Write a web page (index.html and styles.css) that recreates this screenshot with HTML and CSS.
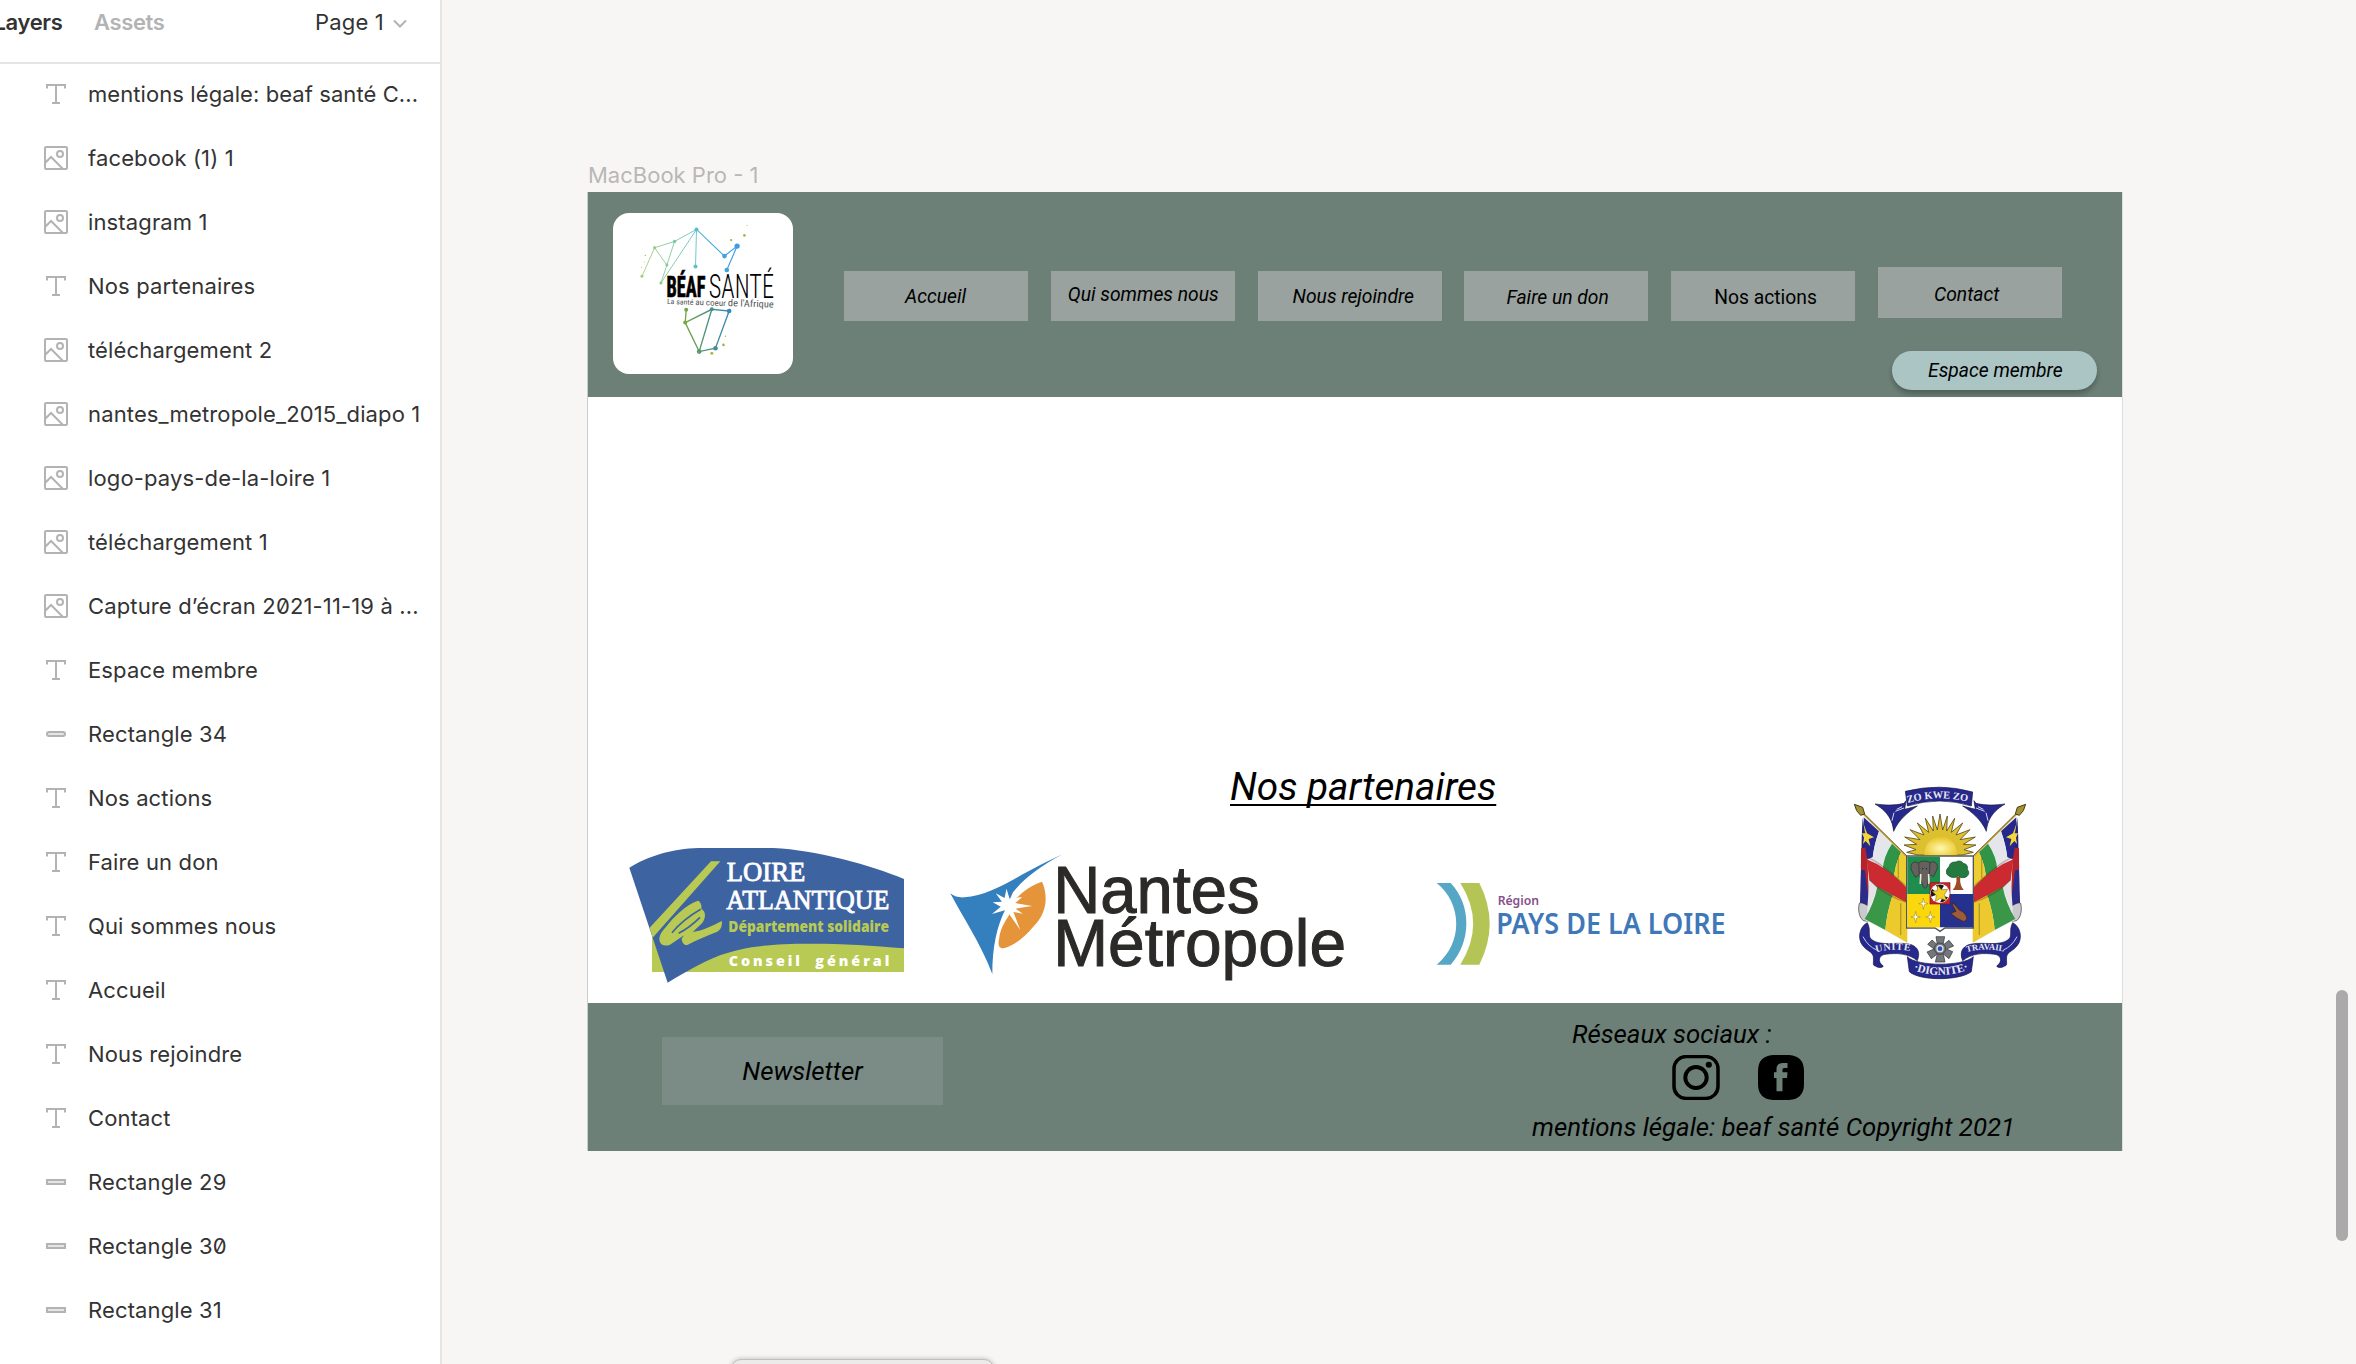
FILE: index.html
```html
<!DOCTYPE html>
<html lang="fr">
<head>
<meta charset="utf-8">
<title>Béaf Santé</title>
<link rel="stylesheet" href="styles.css">
</head>
<body>
<svg class="defs" width="0" height="0" aria-hidden="true">
  <symbol id="i-text" viewBox="0 0 24 24"><path d="M3 6.500V3h18v3.500M12 3v18M8 21h8" fill="none" stroke="#b3b3b3" stroke-width="2"/></symbol>
  <symbol id="i-image" viewBox="0 0 24 24"><g fill="none" stroke="#b3b3b3" stroke-width="2"><rect x="1" y="1" width="22" height="22" rx="1"/><circle cx="16" cy="8" r="3"/><path d="M1.500 16.500L7 11l12 12"/></g></symbol>
  <symbol id="i-pill" viewBox="0 0 24 24"><rect x="3" y="10" width="18" height="4" rx="2" fill="#e5e5e5" stroke="#b3b3b3" stroke-width="2"/></symbol>
  <symbol id="i-rect" viewBox="0 0 24 24"><rect x="3" y="10" width="18" height="4" fill="#e5e5e5" stroke="#b3b3b3" stroke-width="2"/></symbol>
</svg>
<div class="app">
  <aside class="sidebar">
    <header class="tabs">
      <span class="tab tab-active">Layers</span><span class="tab">Assets</span>
      <span class="page">Page 1</span>
      <svg class="chevron" width="14" height="9" viewBox="0 0 14 9"><path d="M1 1.500l6 6 6-6" fill="none" stroke="#b3b3b3" stroke-width="2"/></svg>
    </header>
    <ul class="layers">
      <li><svg><use href="#i-text"/></svg><span class="clipped">mentions légale: beaf santé C...</span></li>
      <li><svg><use href="#i-image"/></svg>facebook (1) 1</li>
      <li><svg><use href="#i-image"/></svg>instagram 1</li>
      <li><svg><use href="#i-text"/></svg>Nos partenaires</li>
      <li><svg><use href="#i-image"/></svg>téléchargement 2</li>
      <li><svg><use href="#i-image"/></svg>nantes_metropole_2015_diapo 1</li>
      <li><svg><use href="#i-image"/></svg>logo-pays-de-la-loire 1</li>
      <li><svg><use href="#i-image"/></svg>téléchargement 1</li>
      <li><svg><use href="#i-image"/></svg><span>Capture d’écran 2<span class="zero">0</span>21-11-19 à ...</span></li>
      <li><svg><use href="#i-text"/></svg>Espace membre</li>
      <li><svg><use href="#i-pill"/></svg>Rectangle 34</li>
      <li><svg><use href="#i-text"/></svg>Nos actions</li>
      <li><svg><use href="#i-text"/></svg>Faire un don</li>
      <li><svg><use href="#i-text"/></svg>Qui sommes nous</li>
      <li><svg><use href="#i-text"/></svg>Accueil</li>
      <li><svg><use href="#i-text"/></svg>Nous rejoindre</li>
      <li><svg><use href="#i-text"/></svg>Contact</li>
      <li><svg><use href="#i-rect"/></svg>Rectangle 29</li>
      <li><svg><use href="#i-rect"/></svg><span>Rectangle 3<span class="zero">0</span></span></li>
      <li><svg><use href="#i-rect"/></svg>Rectangle 31</li>
    </ul>
  </aside>

  <main class="canvas">
    <div class="frame-name">MacBook Pro - 1</div>
    <section class="frame">
      <header class="site-header">
        <div class="brand">
          <svg width="180" height="161" viewBox="99 189 541 483">
            <defs>
              <linearGradient id="ga" gradientUnits="userSpaceOnUse" x1="180" y1="0" x2="480" y2="0"><stop offset="0" stop-color="#a9c96f"/><stop offset=".3" stop-color="#7fc79b"/><stop offset=".56" stop-color="#5bbfc8"/><stop offset=".75" stop-color="#42aadb"/><stop offset="1" stop-color="#3b9be8"/></linearGradient>
              <linearGradient id="gb" gradientUnits="userSpaceOnUse" x1="310" y1="0" x2="450" y2="0"><stop offset="0" stop-color="#7aa83a"/><stop offset=".5" stop-color="#4c937e"/><stop offset="1" stop-color="#3487bd"/></linearGradient>
            </defs>
            <g fill="none" stroke="url(#ga)" stroke-width="3">
              <path d="M186 379L224 293L284 274L350 238" stroke-width="2.600"/>
              <path d="M224 293L261 345L284 274M261 345L243 399L350 238L347 349" stroke-width="2.600"/>
              <path d="M350 238L434 318L472 288L441 360" stroke-width="3.500"/>
            </g>
            <g fill="none" stroke="url(#gb)" stroke-width="4"><path d="M319 479L316 518L396 478L448 483L407 595L358 605L316 518M396 478L358 605"/></g>
            <g fill="url(#ga)"><circle cx="186" cy="379" r="4.500"/><circle cx="224" cy="293" r="4.500"/><circle cx="284" cy="274" r="5"/><circle cx="261" cy="345" r="4.500"/><circle cx="243" cy="399" r="4.500"/><circle cx="350" cy="238" r="6"/><circle cx="347" cy="349" r="6"/><circle cx="434" cy="318" r="7"/><circle cx="472" cy="288" r="8"/><circle cx="441" cy="360" r="7"/></g>
            <g fill="url(#gb)"><circle cx="319" cy="479" r="6"/><circle cx="316" cy="518" r="6"/><circle cx="396" cy="478" r="6"/><circle cx="448" cy="483" r="7"/><circle cx="407" cy="595" r="7"/><circle cx="358" cy="605" r="7"/></g>
            <g fill="#9cbb3c"><circle cx="454" cy="270" r="3.500"/><circle cx="494" cy="256" r="4"/><circle cx="502" cy="226" r="1.500"/><circle cx="431" cy="585" r="4"/><circle cx="396" cy="610" r="4.500"/><circle cx="437" cy="559" r="2"/><circle cx="196" cy="316" r="2"/><circle cx="193" cy="336" r="1.500"/><circle cx="185" cy="352" r="1.500"/></g>
            <text class="beaf" x="260" y="441" textLength="117" lengthAdjust="spacingAndGlyphs">BÉAF</text>
            <text class="sante" x="387" y="445" textLength="196" lengthAdjust="spacingAndGlyphs">SANTÉ</text>
            <text class="motto" transform="rotate(2 261 461)" x="261" y="462" textLength="321" lengthAdjust="spacingAndGlyphs"><tspan font-size="22">La santé </tspan><tspan font-size="25">au coeur </tspan><tspan font-size="29">de l'Afrique</tspan></text>
          </svg>
        </div>
        <div class="header-right">
          <nav class="menu">
            <a class="item accueil">Accueil</a>
            <a class="item qui">Qui sommes nous</a>
            <a class="item rejoindre">Nous rejoindre</a>
            <a class="item don">Faire un don</a>
            <a class="item actions">Nos actions</a>
            <a class="item contact">Contact</a>
          </nav>
          <a class="member">Espace membre</a>
        </div>
      </header>

      <div class="partners">
        <div class="partners-left">
          <h2>Nos partenaires</h2>
          <div class="logos">
            <svg width="320" height="170" viewBox="0 0 960 510">
              <path d="M126 290H882V426H126z" fill="#b9ca54"/>
              <path d="M58 113C110 80 190 55 265 54H490C620 60 780 105 882 147V355C790 347 700 341 600 341C480 341 400 350 330 376C270 400 230 425 173 458z" fill="#3d63a1"/>
              <g fill="#b9ca54"><path d="M303 94H331L128 323L119 293z"/><path d="M264 212C272 216 276 226 274 236L282 244C288 256 284 270 276 280L248 306C280 302 305 288 336 273C336 292 332 300 320 306C290 318 258 330 232 345C222 346 216 338 215 326L222 316L180 344C166 350 152 346 149 334C146 320 152 310 160 300C190 262 224 226 264 212z"/></g>
              <path d="M186 308Q220 268 272 238M206 310Q240 292 270 262" fill="none" stroke="#3d63a1" stroke-width="5"/>
              <g class="la-serif"><text x="350" y="152" textLength="236" lengthAdjust="spacingAndGlyphs">LOIRE</text><text x="349" y="238" textLength="489" lengthAdjust="spacingAndGlyphs">ATLANTIQUE</text></g>
              <text class="la-dept" x="355" y="306" textLength="482" lengthAdjust="spacingAndGlyphs">Département solidaire</text>
              <text class="la-cons" x="356" y="409" textLength="214">Conseil</text><text class="la-cons" x="616" y="409" textLength="222">général</text>
            </svg>
            <svg class="nantes" width="436" height="150" viewBox="0 255 1140 450" preserveAspectRatio="none">
              <path d="M53 430C63 440 77 443 90 442C140 438 195 405 240 374Q295 340 346 313Q255 370 217 427L196 481C175 530 163 590 163 672C130 575 85 500 53 430z" fill="#3480bf"/>
              <path d="M293 395C310 440 305 490 270 530C245 565 215 590 193 595C177 595 178 580 181 565C184 535 196 515 207 495L217 456C240 425 265 405 293 395z" fill="#e69439"/>
              <path d="M200 416L208 446L241 441L223 459L267 468L224 476L243 491L218 486L236 540L207 492L196 481L162 492L185 470L164 457L188 455L172 430L195 444z" fill="#fff"/>
              <text x="322" y="488" textLength="540" lengthAdjust="spacingAndGlyphs">Nantes</text>
              <text x="322" y="647" textLength="766" lengthAdjust="spacingAndGlyphs">Métropole</text>
            </svg>
            <svg class="pays" width="360" height="140" viewBox="0 0 1080 420">
              <path d="M110 99H152C215 165 215 275 152 344H110C190 280 187 160 110 99z" fill="#56a6c6"/>
              <path d="M181 99H238Q300 221 238 344H181Q258 221 181 99z" fill="#b4c455"/>
              <text class="region" x="293" y="165" textLength="124" lengthAdjust="spacingAndGlyphs">Région</text>
              <text class="loire" x="289" y="252" textLength="688" lengthAdjust="spacingAndGlyphs">PAYS DE LA LOIRE</text>
            </svg>
          </div>
        </div>
        <svg class="arms" width="220" height="230" viewBox="0 0 660 690">
          <defs>
            <radialGradient id="sun" cx=".5" cy=".6" r=".6"><stop offset="0" stop-color="#fff9b0"/><stop offset="1" stop-color="#e6c21f"/></radialGradient>
            <g id="flag">
              <path d="M98 145C112 200 104 300 117 405C100 420 112 440 126 450L95 445C82 420 90 405 92 380C97 300 92 220 98 145z" fill="#24247c"/>
              <path d="M93 235L112 232L120 400H92z" fill="#b2232d"/>
              <path d="M93 300L104 300L120 410L90 402z" fill="#2a2c8a"/>
              <path d="M88 400C95 395 112 405 120 412C108 425 112 445 122 455L100 452C85 440 84 415 88 400z" fill="#c9c9cf" stroke="#333" stroke-width="2"/>
              <path d="M101 142L230 262V518L105 450L118 410L112 260z" fill="#f2f2f2"/>
              <path d="M101 142L147 184Q132 225 128 262L112 268L105 230z" fill="#26288c"/>
              <path d="M147 184L186 221Q160 260 158 290L112 268H128Q132 225 147 184z" fill="#e4e6ec"/>
              <path d="M186 221L213 247Q192 290 192 332L158 300Q160 260 186 221z" fill="#2f9446"/>
              <path d="M213 247L232 264V350L192 332Q192 290 213 247z" fill="#ecce30"/>
              <path d="M110 268Q170 290 232 355V398Q160 375 118 330z" fill="#cb2a30"/>
              <path d="M118 332Q130 350 142 352L110 440z" fill="#e4e4e8"/>
              <path d="M142 350L188 376Q170 430 166 480L104 447Q132 400 142 350z" fill="#3a9748"/>
              <path d="M188 376L232 398V518L166 480Q170 430 188 376z" fill="#ecc92c"/>
              <path d="M112 262Q150 275 232 352M118 330Q160 375 232 398M205 262V325M212 400V495" fill="none" stroke="#3b2a10" stroke-opacity=".3" stroke-width="4"/>
              <path d="M96 128L228 258" stroke="#c4a03a" stroke-width="5"/><path d="M99 128L231 258" stroke="#4a3c12" stroke-width="2"/>
              <path d="M73 103L98 112L104 132L92 136L80 122z" fill="#a39233" stroke="#443c10" stroke-width="3"/>
              <path d="M100 160L111 190L132 202L116 207L121 229L107 213L99 222L102 203L96 190L106 190z" fill="#f4d83a"/>
              <path d="M112 458C88 470 82 505 97 525C112 545 128 545 130 560C132 580 126 585 136 588C145 594 157 594 160 588C140 575 148 555 165 553C200 548 235 550 262 572C275 540 255 525 235 522C200 515 150 530 124 508C112 497 124 480 112 458z" fill="#26288c" stroke="#15163f" stroke-width="2"/>
              <path d="M99 500Q115 530 140 540" fill="none" stroke="#c8cbe8" stroke-width="3"/>
              <path d="M135 102C165 105 190 108 222 100L228 92L224 118L262 108C235 125 205 150 191 184C188 160 182 130 135 102z" fill="#26288c" stroke="#15163f" stroke-width="2"/>
              <path d="M192 128L186 152M196 124L222 114M200 118L216 110" fill="none" stroke="#d8daf2" stroke-width="3"/>
            </g>
          </defs>
          <use href="#flag"/><use href="#flag" transform="matrix(-1 0 0 1 660 0)"/>
          <path d="M330 132l8 48 14-42-2 45 24-38-10 42 34-28-20 36 42-16-30 30 46-8-36 22 38 2-36 14 28 8-34 8H264l-34-8 28-8-36-14 38-2-36-22 46 8-30-30 42 16-20-36 34 28-10-42 24 38-2-45 14 42z" fill="#dcc030" stroke="#5c4b13" stroke-width="2.500"/>
          <path d="M282 258C282 180 382 180 382 258z" fill="url(#sun)"/>
          <path d="M226 64Q330 38 428 66L424 108Q330 78 232 108z" fill="#26288c" stroke="#15163f" stroke-width="2"/>
          <path id="m1" d="M233 99Q330 70 430 100" fill="none"/>
          <text class="motto-s" font-size="31"><textPath href="#m1">ZO KWE ZO</textPath></text>
          <path d="M230 258H430V474H345L330 484L315 474H230z" fill="#fff" stroke="#555" stroke-width="4"/>
          <path d="M232 260h98v112h-98z" fill="#1f8d4d"/><path d="M232 372h98v100h-98z" fill="#fbd80e"/><path d="M330 372h99v100h-99z" fill="#24318e"/>
          <g fill="#65615e" stroke="#2f2d2c" stroke-width="2"><path d="M268 282C255 268 238 280 244 300L256 322L270 312zM298 280C312 268 328 282 320 300L310 320L296 312z"/><path d="M266 278Q283 268 300 278L298 318L291 350Q284 360 279 348L268 318z"/></g>
          <path d="M272 312L271 342M296 312L297 342" stroke="#f0ead8" stroke-width="5"/><path d="M277 296h3M288 296h3" stroke="#111" stroke-width="3"/>
          <path d="M379 320Q382 345 368 360H401Q388 345 391 320" fill="#9d4a25"/>
          <path d="M350 312Q346 298 357 290Q360 275 377 276Q392 268 400 280Q416 284 412 298Q422 310 410 320Q396 328 385 318Q366 330 350 312z" fill="#247b3f" stroke="#125027" stroke-width="2"/>
          <path d="M362 430L378 424L366 403L372 401L388 420Q408 428 411 446L402 455Q378 446 362 430z" fill="#9c5b3a" stroke="#3b1d10" stroke-width="2"/>
          <path d="M300 338H360V402H300z" fill="#c9252c" stroke="#801318" stroke-width="2"/><circle cx="330" cy="370" r="29" fill="#fff"/><path d="M318 346Q330 340 342 347L330 366zM304 380Q300 365 306 356L325 372zM340 378L354 382Q345 398 330 397z" fill="#16161c"/>
          <path d="M323 345L334 359L353 358L343 374L350 392L331 385L316 395L319 376L306 364L322 362z" fill="#f2cf24" stroke="#6c5710" stroke-width="1.500"/>
          <g fill="#fff" stroke="#907a18" stroke-width="1.500"><path id="st" d="M280 384l3 14 11 3-11 3-3 14-3-14-11-3 11-3z"/><use href="#st" transform="translate(-23 40)"/><use href="#st" transform="translate(21 40)"/></g>
          <path d="M232 560C260 590 400 590 430 560L424 605C390 632 270 634 238 605z" fill="#26288c" stroke="#15163f" stroke-width="2"/>
          <g fill="#74777c" stroke="#2d2f33" stroke-width="2"><path d="M318 500H344L339 525L357 511L371 528L350 537L368 545L357 566L340 552L345 576H316L322 552L304 566L291 546L312 537L293 523L306 510L322 524z"/><circle cx="330" cy="536" r="17"/></g><circle cx="330" cy="536" r="11" fill="#dfe4ee"/><circle cx="330" cy="536" r="7" fill="#2f4fae"/>
          <path id="m2" d="M138 547Q195 532 254 546" fill="none"/><text class="motto-s" font-size="30" letter-spacing="2"><textPath href="#m2">UNITE</textPath></text>
          <path id="m3" d="M410 546Q466 531 532 547" fill="none"/><text class="motto-s" font-size="26"><textPath href="#m3">TRAVAIL</textPath></text>
          <path id="m4" d="M250 599Q330 632 420 597" fill="none"/><text class="motto-s" font-size="34"><textPath href="#m4">·DIGNITE·</textPath></text>
        </svg>
      </div>

      <footer class="site-footer">
        <div class="newsletter">Newsletter</div>
        <div class="social">
          <p class="social-title">Réseaux sociaux :</p>
          <div class="social-icons">
            <svg width="48" height="45" viewBox="0 0 48 45"><rect x="2" y="1.600" width="44" height="41.800" rx="12" ry="12" fill="none" stroke="#000" stroke-width="3.500"/><ellipse cx="24" cy="22.500" rx="10.700" ry="10.500" fill="none" stroke="#000" stroke-width="3.900"/><ellipse cx="36.800" cy="9.700" rx="3.100" ry="3"/></svg>
            <svg width="46" height="45" viewBox="0 0 46 45"><path fill-rule="evenodd" d="M15 0H31Q46 1 46 16V29Q46 44 31 45H15Q0 44 0 29V16Q0 1 15 0zM18.500 36.300H24.500V23H29L29.500 17.300H24.500V14.500Q24.500 13 26 13H29.500V8H24.500Q18.500 8.500 18.500 14V17.300H16V23H18.500z"/></svg>
          </div>
          <p class="legal">mentions légale: beaf santé Copyright 2021</p>
        </div>
      </footer>
    </section>
    <div class="scroll-thumb"></div>
    <div class="toast"></div>
  </main>
</div>
</body>
</html>
```
FILE: styles.css
```css
* { box-sizing: border-box; }
body { margin: 0; background: #f8f6f5; }
p, h2, ul { margin: 0; padding: 0; }
.defs { position: absolute; }
.app { display: flex; width: 2356px; height: 1364px; overflow: hidden; }

/* Layers panel */
.sidebar { width: 442px; flex: none; background: #fff; border-right: 2px solid #e5e5e5; font: 22px/28px Inter, "Liberation Sans", sans-serif; letter-spacing: .14px; color: #333; }
.tabs { height: 64px; border-bottom: 2px solid #e5e5e5; display: flex; align-items: flex-start; padding-top: 8px; white-space: nowrap; }
.tab { font-weight: 600; letter-spacing: -.35px; color: #b3b3b3; margin-right: 31.5px; }
.tab-active { color: #333; width: 62.5px; display: flex; justify-content: flex-end; }
.page { margin-left: 119px; }
.chevron { margin: 11px 0 0 9px; }
.layers { list-style: none; margin-top: -2px; }
.layers li { display: flex; align-items: center; height: 64px; padding-left: 44px; white-space: nowrap; }
.layers svg { width: 24px; height: 24px; margin-right: 20px; flex: none; }
.clipped { letter-spacing: .08px; }
.zero { font-feature-settings: "zero"; }

/* Canvas */
.canvas { flex: 1; position: relative; padding: 159px 0 0 145px; background: #f8f6f5; overflow: hidden; }
.frame-name { font: 22px/28px Inter, "Liberation Sans", sans-serif; color: #b9b7b6; height: 33px; padding-left: 1px; padding-top: 2px; }
.frame { width: 1536px; height: 959px; background: #fff; border-left: 1px solid #c7cecb; border-right: 1px solid #dcdfdd; font-family: Roboto, "Liberation Sans", sans-serif; color: #000; }

.site-header { display: flex; height: 205px; background: #6c8077; }
.brand { width: 180px; height: 161px; margin: 21px 0 0 25px; background: #fff; border-radius: 16px; }
.brand svg { display: block; }
.beaf { font: 700 86px "Roboto Condensed", Roboto, sans-serif; stroke: #000; stroke-width: 2; }
.sante { font: 300 100px "Roboto Condensed", Roboto, sans-serif; }
.motto { font-family: "Roboto Condensed", Roboto, sans-serif; fill: #555; }
.header-right { display: flex; flex-direction: column; padding: 79px 25px 0 51px; flex: 1; }
.menu { display: flex; gap: 22.8px; }
.item { flex: none; width: 184px; height: 50px; background: #99a29e; font-size: 19.3px; line-height: 24px; font-style: italic; padding-top: 14px; white-space: nowrap; }
.accueil { padding-left: 61px; }
.qui { padding: 12px 0 0 17px; }
.rejoindre { padding-left: 35px; }
.don { padding: 15px 0 0 42px; }
.actions { padding: 15px 0 0 43px; font-style: normal; }
.contact { margin-top: -4px; height: 51px; padding: 16px 0 0 56px; }
.member { align-self: flex-end; width: 205px; height: 39px; margin-top: 29.5px; background: #abc5c5; border-radius: 20px; box-shadow: 0 4px 5px rgba(0,0,0,.25); font-size: 19.3px; line-height: 24px; font-style: italic; padding: 8px 0 0 36px; white-space: nowrap; }

.partners { display: flex; height: 606px; }
.partners-left { width: 1242px; }
.partners h2 { font-size: 38.7px; line-height: 46px; font-weight: 400; font-style: italic; padding: 367px 0 0 642px; text-decoration: underline; text-decoration-thickness: 2px; text-underline-offset: 4px; text-decoration-skip-ink: none; white-space: nowrap; }
.logos { display: flex; align-items: flex-start; padding: 20px 0 0 22px; }
.logos svg { flex: none; }
.nantes { margin-top: 5px; }
.nantes text { font: 198px "Liberation Sans", Arial, sans-serif; fill: #2b2a28; stroke: #2b2a28; stroke-width: 3; }
.pays { margin: 20px 0 0 34px; }
.la-serif { font: 85px "Liberation Serif", serif; fill: #fff; stroke: #fff; stroke-width: 2.5; }
.la-dept { font: 800 46px "Open Sans", sans-serif; fill: #b9ca54; }
.la-cons { font: 800 43px "Open Sans", sans-serif; fill: #fff; }
.region { font: 600 39px "Noto Sans", sans-serif; fill: #84508b; }
.loire { font: 600 87px "Noto Sans", sans-serif; fill: #3f78b8; }
.arms { margin-top: 373px; flex: none; }
.motto-s { font-family: "Liberation Serif", serif; font-weight: 700; fill: #e9e9f2; }

.site-footer { display: flex; height: 148px; background: #6c8077; font-size: 25.8px; line-height: 30px; font-style: italic; white-space: nowrap; }
.newsletter { width: 281px; height: 68px; margin: 34px 0 0 74px; background: #7a8c85; display: flex; align-items: center; justify-content: center; }
.social { padding: 16px 0 0 589px; }
.social-title { padding-left: 40px; }
.social-icons { display: flex; gap: 38px; padding: 6px 0 12px 139.5px; }

.scroll-thumb { position: absolute; left: 1894px; top: 990px; width: 12px; height: 251px; border-radius: 6px; background: #aba9a9; }
.toast { position: absolute; left: 289px; top: 1359px; width: 263px; height: 40px; border-radius: 10px; background: #ecebea; border: 1px solid #c2c0bf; box-shadow: 0 0 5px rgba(0,0,0,.25); }
```
